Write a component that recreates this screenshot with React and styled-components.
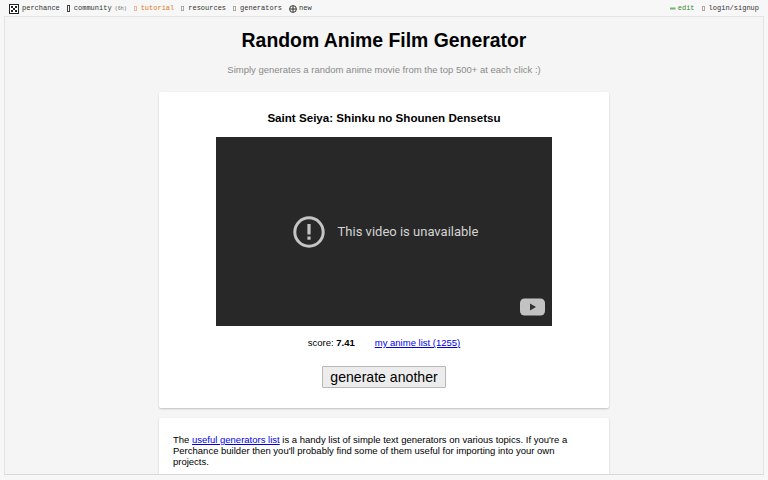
import React from "react";
import styled, { createGlobalStyle } from "styled-components";

const Global = createGlobalStyle`
  html, body { margin: 0; padding: 0; height: 100%; overflow: hidden; background: #f7f7f7; }
  #root { height: 100%; }
`;

const Page = styled.div`
  width: 768px;
  height: 480px;
  display: flex;
  flex-direction: column;
  overflow: hidden;
  background: #f7f7f7;
`;

const TopBar = styled.nav`
  height: 16px;
  flex: none;
  box-sizing: border-box;
  padding: 1px 9px 0 9px;
  display: flex;
  align-items: center;
  justify-content: space-between;
  font: 7px/15px "Liberation Mono", monospace;
  color: #333;
`;

const NavGroup = styled.div`
  display: flex;
  align-items: center;
  gap: 7px;
`;

const NavItem = styled.a`
  display: flex;
  align-items: center;
  gap: ${(p) => p.$gap ?? 4}px;
  color: ${(p) => p.$color || "#333"};
  white-space: nowrap;
`;

const Tofu = styled.span`
  display: inline-block;
  width: 3px;
  height: ${(p) => (p.$tall ? 7 : 5)}px;
  border: 1px solid ${(p) => p.$color || "#aaa"};
  box-sizing: border-box;
`;

const Small = styled.span`
  font-size: 5px;
  color: #666;
  margin-left: 3px;
`;

const Frame = styled.main`
  flex: none;
  height: 459px;
  margin: 0 4px;
  border: 1px solid #e4e4e4;
  border-bottom-color: #d8d8d8;
  box-sizing: border-box;
  background: #f5f5f5;
  overflow: hidden;
  display: flex;
  flex-direction: column;
  align-items: center;
  font-family: "Liberation Sans", Arial, sans-serif;
`;

const Title = styled.h1`
  margin: 10px 0 0;
  font-size: 19.4px;
  line-height: 26px;
  font-weight: 700;
  color: #000;
`;

const Subtitle = styled.p`
  margin: 11px 0 0;
  font-size: 9.5px;
  line-height: 12px;
  color: #8a8a8a;
`;

const Card = styled.section`
  width: 450px;
  box-sizing: border-box;
  background: #fff;
  border-radius: 2px;
  box-shadow: 0 1px 2px rgba(0, 0, 0, 0.22);
  flex: none;
`;

const MainCard = styled(Card)`
  margin-top: 16px;
  height: 316px;
  padding-top: 19px;
  display: flex;
  flex-direction: column;
  align-items: center;
`;

const FilmTitle = styled.h2`
  margin: 0;
  font-size: 11.6px;
  line-height: 14px;
  font-weight: 700;
  color: #000;
`;

const Video = styled.div`
  position: relative;
  margin-top: 12px;
  width: 336px;
  height: 189px;
  background: #282828;
  display: flex;
  align-items: center;
  justify-content: center;
  gap: 12px;
  padding-left: 2px;
  box-sizing: border-box;
`;

const VideoMessage = styled.span`
  font: 13px/16px Roboto, "Liberation Sans", sans-serif;
  color: #d4d4d4;
`;

const YoutubeMark = styled.svg`
  position: absolute;
  right: 7px;
  bottom: 10px;
`;

const InfoRow = styled.div`
  margin-top: 10px;
  display: flex;
  gap: 20px;
  font-size: 9.5px;
  line-height: 13px;
  color: #000;
`;

const TextLink = styled.a`
  color: #0000ee;
  text-decoration: underline;
`;

const GenerateButton = styled.button`
  margin-top: 17px;
  width: 124px;
  height: 22px;
  padding: 0;
  font: 14.1px "Liberation Sans", Arial, sans-serif;
  color: #000;
  background: #ececec;
  border: 1px solid #b8b8b8;
  border-radius: 1px;
`;

const NoteCard = styled(Card)`
  margin-top: 10px;
  padding: 16px 16px 15px 14px;
  font-size: 9.5px;
  line-height: 11px;
  color: #000;
`;

export default function App() {
  return (
    <Page>
      <Global />
      <TopBar>
        <NavGroup>
          <NavItem $gap={3}>
            <svg width="10" height="10" viewBox="0 0 10 10">
              <rect x="0.5" y="0.5" width="9" height="9" fill="#fff" stroke="#222" />
              <rect x="2" y="2" width="2" height="2" fill="#222" />
              <rect x="6" y="2" width="2" height="2" fill="#222" />
              <rect x="4" y="4" width="2" height="2" fill="#222" />
              <rect x="2" y="6" width="2" height="2" fill="#222" />
              <rect x="6" y="6" width="2" height="2" fill="#222" />
            </svg>
            perchance
          </NavItem>
          <NavItem>
            <Tofu $tall $color="#444" />
            <span>
              community<Small>(6h)</Small>
            </span>
          </NavItem>
          <NavItem $color="#e07b28">
            <Tofu $color="#eebb90" />
            tutorial
          </NavItem>
          <NavItem>
            <Tofu />
            resources
          </NavItem>
          <NavItem>
            <Tofu />
            generators
          </NavItem>
          <NavItem $gap={2}>
            <svg width="8" height="8" viewBox="0 0 8 8" fill="none" stroke="#333" strokeWidth="1">
              <circle cx="4" cy="4" r="3.4" />
              <path d="M4 1v6M1 4h6" />
            </svg>
            new
          </NavItem>
        </NavGroup>
        <NavGroup>
          <NavItem $color="#2e8b2e" $gap={2}>
            <svg width="6" height="5" viewBox="0 0 6 5">
              <path d="M0 1.5h5.5v2H0z" fill="#6fb56f" />
            </svg>
            edit
          </NavItem>
          <NavItem>
            <Tofu />
            login/signup
          </NavItem>
        </NavGroup>
      </TopBar>
      <Frame>
        <Title>Random Anime Film Generator</Title>
        <Subtitle>Simply generates a random anime movie from the top 500+ at each click :)</Subtitle>
        <MainCard>
          <FilmTitle>Saint Seiya: Shinku no Shounen Densetsu</FilmTitle>
          <Video>
            <svg width="34" height="34" viewBox="0 0 34 34">
              <circle cx="17" cy="17" r="14.2" fill="none" stroke="#c4c4c4" strokeWidth="3" />
              <rect x="15.4" y="9" width="3.2" height="10.5" fill="#c4c4c4" />
              <rect x="15.4" y="21.5" width="3.2" height="3.2" fill="#c4c4c4" />
            </svg>
            <VideoMessage>This video is unavailable</VideoMessage>
            <YoutubeMark width="25" height="18" viewBox="0 0 25 18">
              <rect x="0" y="0.5" width="25" height="17" rx="4.5" fill="#c2c2c2" />
              <path d="M10 5.5v7l6-3.5z" fill="#333" />
            </YoutubeMark>
          </Video>
          <InfoRow>
            <span>
              score: <b>7.41</b>
            </span>
            <TextLink href="#">my anime list (1255)</TextLink>
          </InfoRow>
          <GenerateButton>generate another</GenerateButton>
        </MainCard>
        <NoteCard>
          The <TextLink href="#">useful generators list</TextLink> is a handy list of simple text generators on various
          topics. If you're a Perchance builder then you'll probably find some of them useful for importing into your
          own projects.
        </NoteCard>
      </Frame>
    </Page>
  );
}
